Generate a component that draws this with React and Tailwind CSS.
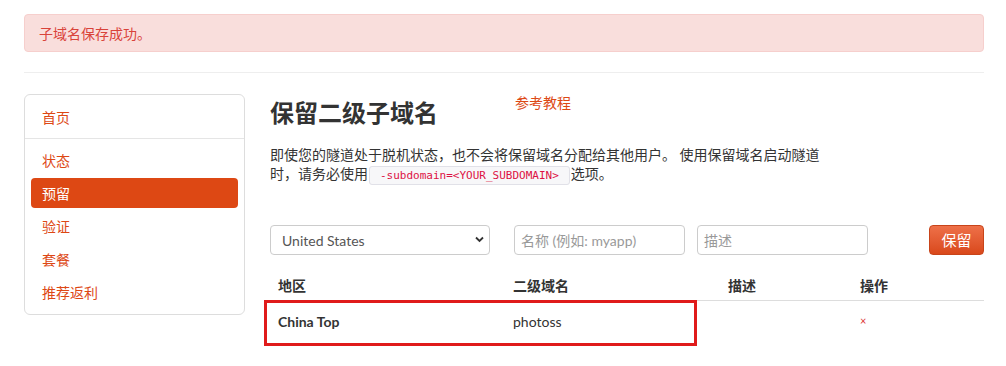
import { useState } from 'react';

const font = { fontFamily: 'Lato, "Noto Sans CJK SC", sans-serif' };

export default function App() {
  const [active] = useState('预留');
  const menu = ['状态', '预留', '验证', '套餐', '推荐返利'];

  return (
    <div className="w-[1006px] h-[366px] bg-white pl-[24px] pr-[22px] pt-[14px] text-[14px] text-[#333]" style={font}>
      {/* alert */}
      <div className="h-[38px] flex items-center px-[14px] rounded-[4px] border border-[#f6cfcd] bg-[#f9dedc] text-[#d9433a]">
        子域名保存成功。
      </div>

      <div className="mt-[20px] border-t border-[#eeeeee]" />

      <div className="mt-[21px] flex gap-[25px]">
        {/* sidebar */}
        <div className="w-[221px] h-[221px] shrink-0 rounded-[6px] border border-[#dddddd] pt-[7px] pb-[7px]">
          <div className="h-[30px] flex items-center px-[17px] text-[#dd4814]">首页</div>
          <div className="my-[6px] border-t border-[#e5e5e5]" />
          <div className="flex flex-col gap-[3px] px-[6px]">
            {menu.map((m) => (
              <div
                key={m}
                className={
                  m === active
                    ? 'h-[30px] flex items-center px-[11px] rounded-[4px] bg-[#dd4814] text-white'
                    : 'h-[30px] flex items-center px-[11px] text-[#dd4814]'
                }
              >
                {m}
              </div>
            ))}
          </div>
        </div>

        {/* main */}
        <div className="flex-1">
          <div className="flex items-start">
            <h2 className="text-[24px] font-bold text-[#333] leading-[36px] mt-[1px]">保留二级子域名</h2>
            <a className="ml-[77px] -mt-[2px] text-[#dd4814]">参考教程</a>
          </div>

          <p className="mt-[14px] w-[560px] leading-[19px]">
            即使您的隧道处于脱机状态，也不会将保留域名分配给其他用户。 使用保留域名启动隧道时，请务必使用
            <code
              className="mx-[1px] px-[10px] py-[2px] rounded-[3px] border border-[#e1e1e8] bg-[#f7f7f9] text-[#dd1144] text-[11px]"
              style={{ fontFamily: '"DejaVu Sans Mono", monospace' }}
            >
              -subdomain=&lt;YOUR_SUBDOMAIN&gt;
            </code>
            选项。
          </p>

          {/* form */}
          <div className="mt-[40px] flex items-center h-[30px]">
            <div className="relative w-[220px] h-[30px]">
              <div className="h-full flex items-center px-[11px] rounded-[4px] border border-[#cccccc] bg-white text-[#555]">
                United States
              </div>
              <svg className="absolute right-[6px] top-[11px]" width="9" height="7" viewBox="0 0 9 7">
                <path d="M1 1.5 L4.5 5 L8 1.5" fill="none" stroke="#333" strokeWidth="1.8" />
              </svg>
            </div>
            <div className="ml-[24px] w-[171px] h-[30px] flex items-center px-[6px] rounded-[4px] border border-[#cccccc] text-[#999]">
              名称 (例如: myapp)
            </div>
            <div className="ml-[12px] w-[171px] h-[30px] flex items-center px-[6px] rounded-[4px] border border-[#cccccc] text-[#999]">
              描述
            </div>
            <button className="ml-auto w-[55px] h-[30px] rounded-[4px] border border-[#c8441a] bg-gradient-to-b from-[#ee7048] to-[#d9481a] text-white text-[15px]">
              保留
            </button>
          </div>

          {/* table */}
          <div className="mt-[16px]">
            <div className="grid grid-cols-[235px_215px_132px_1fr] h-[30px] items-center border-b border-[#dddddd] font-bold">
              <div className="px-[8px]">地区</div>
              <div className="px-[8px]">二级域名</div>
              <div className="px-[8px]">描述</div>
              <div className="px-[8px]">操作</div>
            </div>
            <div className="relative grid grid-cols-[235px_215px_132px_1fr] h-[40px] items-center">
              <div className="px-[8px] font-bold">China Top</div>
              <div className="px-[8px]">photoss</div>
              <div className="px-[8px]"></div>
              <div className="px-[8px] text-[#dd3333] text-[11px]">×</div>
              <div className="absolute left-[-6px] top-[-1px] w-[433px] h-[46px] border-[3px] border-[#e01b1b]" />
            </div>
          </div>
        </div>
      </div>
    </div>
  );
}
